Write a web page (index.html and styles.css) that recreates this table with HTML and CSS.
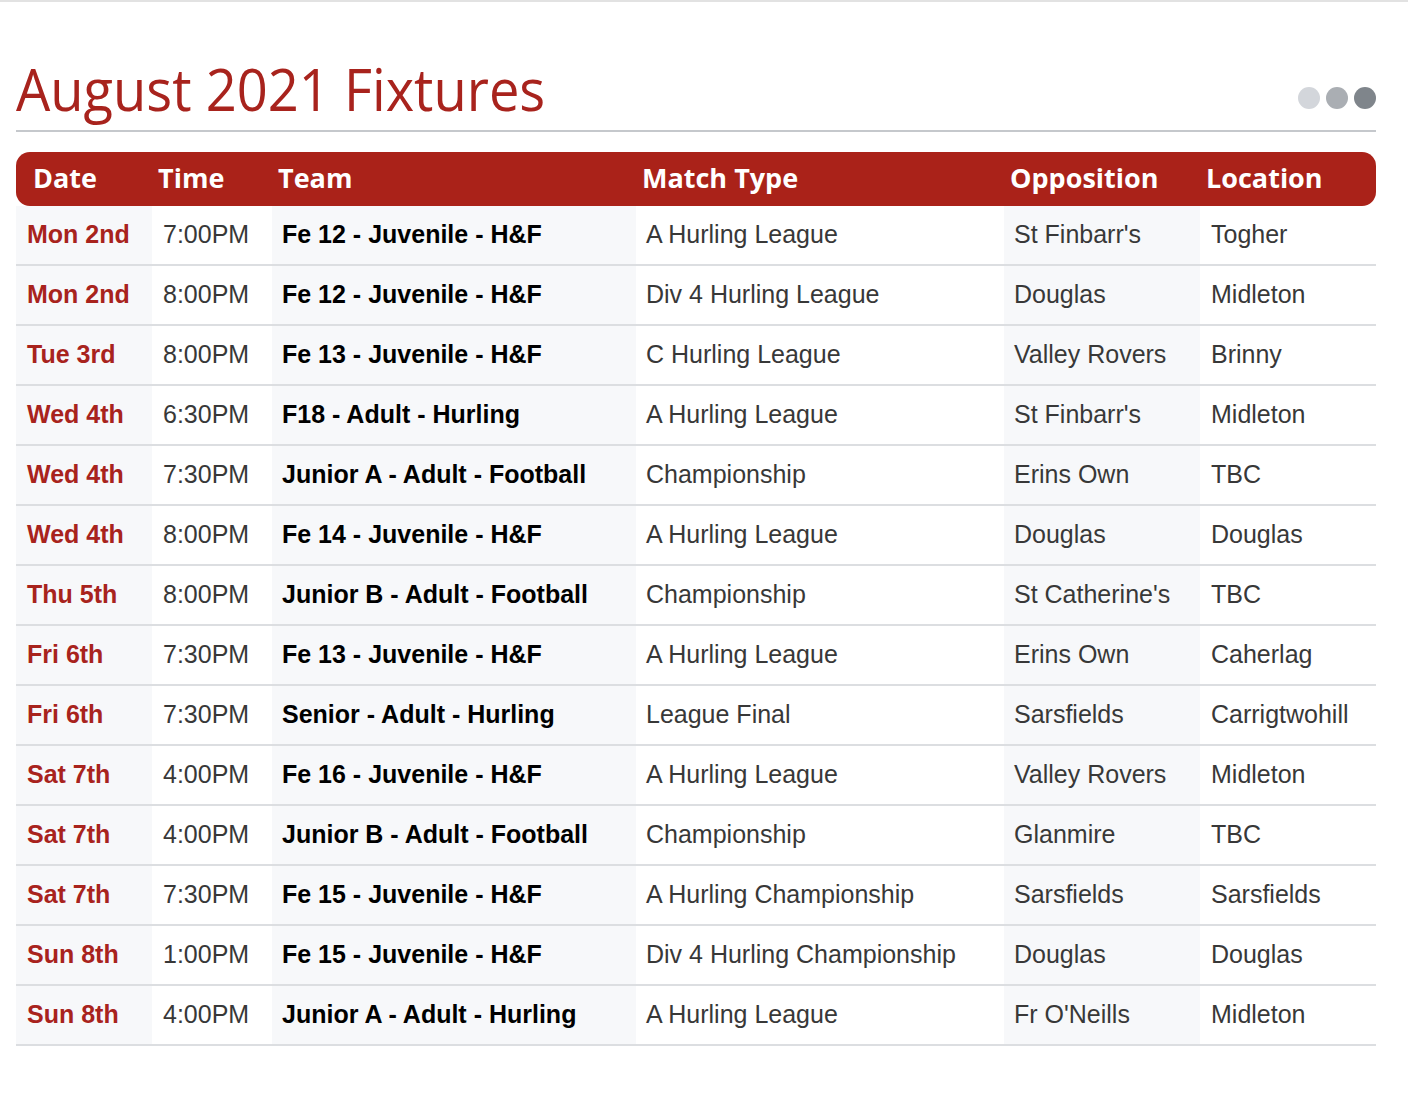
FILE: index.html
```html
<!DOCTYPE html>
<html>
<head>
<meta charset="utf-8">
<title>August 2021 Fixtures</title>
<link rel="stylesheet" href="styles.css">
</head>
<body>
<div class="topline"></div>
<main class="page">
  <header class="head">
    <h1 class="title">August 2021 Fixtures</h1>
    <div class="dots"><span class="dot d1"></span><span class="dot d2"></span><span class="dot d3"></span></div>
  </header>
  <div class="rule"></div>
  <table class="fixtures">
    <colgroup>
      <col class="c-date"><col class="c-time"><col class="c-team"><col class="c-type"><col class="c-opp"><col class="c-loc">
    </colgroup>
    <thead>
      <tr><th>Date</th><th>Time</th><th>Team</th><th>Match Type</th><th>Opposition</th><th>Location</th></tr>
    </thead>
    <tbody>
      <tr><td>Mon 2nd</td><td>7:00PM</td><td>Fe 12 - Juvenile - H&amp;F</td><td>A Hurling League</td><td>St Finbarr's</td><td>Togher</td></tr>
      <tr><td>Mon 2nd</td><td>8:00PM</td><td>Fe 12 - Juvenile - H&amp;F</td><td>Div 4 Hurling League</td><td>Douglas</td><td>Midleton</td></tr>
      <tr><td>Tue 3rd</td><td>8:00PM</td><td>Fe 13 - Juvenile - H&amp;F</td><td>C Hurling League</td><td>Valley Rovers</td><td>Brinny</td></tr>
      <tr><td>Wed 4th</td><td>6:30PM</td><td>F18 - Adult - Hurling</td><td>A Hurling League</td><td>St Finbarr's</td><td>Midleton</td></tr>
      <tr><td>Wed 4th</td><td>7:30PM</td><td>Junior A - Adult - Football</td><td>Championship</td><td>Erins Own</td><td>TBC</td></tr>
      <tr><td>Wed 4th</td><td>8:00PM</td><td>Fe 14 - Juvenile - H&amp;F</td><td>A Hurling League</td><td>Douglas</td><td>Douglas</td></tr>
      <tr><td>Thu 5th</td><td>8:00PM</td><td>Junior B - Adult - Football</td><td>Championship</td><td>St Catherine's</td><td>TBC</td></tr>
      <tr><td>Fri 6th</td><td>7:30PM</td><td>Fe 13 - Juvenile - H&amp;F</td><td>A Hurling League</td><td>Erins Own</td><td>Caherlag</td></tr>
      <tr><td>Fri 6th</td><td>7:30PM</td><td>Senior - Adult - Hurling</td><td>League Final</td><td>Sarsfields</td><td>Carrigtwohill</td></tr>
      <tr><td>Sat 7th</td><td>4:00PM</td><td>Fe 16 - Juvenile - H&amp;F</td><td>A Hurling League</td><td>Valley Rovers</td><td>Midleton</td></tr>
      <tr><td>Sat 7th</td><td>4:00PM</td><td>Junior B - Adult - Football</td><td>Championship</td><td>Glanmire</td><td>TBC</td></tr>
      <tr><td>Sat 7th</td><td>7:30PM</td><td>Fe 15 - Juvenile - H&amp;F</td><td>A Hurling Championship</td><td>Sarsfields</td><td>Sarsfields</td></tr>
      <tr><td>Sun 8th</td><td>1:00PM</td><td>Fe 15 - Juvenile - H&amp;F</td><td>Div 4 Hurling Championship</td><td>Douglas</td><td>Douglas</td></tr>
      <tr><td>Sun 8th</td><td>4:00PM</td><td>Junior A - Adult - Hurling</td><td>A Hurling League</td><td>Fr O'Neills</td><td>Midleton</td></tr>
    </tbody>
  </table>
</main>
</body>
</html>
```

FILE: styles.css
```css
html, body {
  margin: 0;
  padding: 0;
  background: #ffffff;
}

.topline {
  height: 2px;
  background: #e2e2e2;
}

.page {
  padding: 50px 32px 40px 16px;
}

.head {
  display: flex;
  justify-content: space-between;
  align-items: flex-end;
}

.title {
  margin: 0;
  font-family: "Open Sans", sans-serif;
  font-weight: 400;
  font-size: 59px;
  line-height: 72px;
  color: #a8231d;
  transform: scaleX(0.92);
  transform-origin: left center;
}

.dots {
  display: flex;
  gap: 6px;
  margin-bottom: 15px;
}

.dot {
  width: 22px;
  height: 22px;
  border-radius: 50%;
}

.d1 { background: #d3d6db; }
.d2 { background: #aaaeb3; }
.d3 { background: #7f858b; }

.rule {
  height: 2px;
  background: #c5c8cc;
  margin-top: 6px;
  margin-bottom: 20px;
}

.fixtures {
  width: 1360px;
  border-collapse: separate;
  border-spacing: 0;
  table-layout: fixed;
}

.c-date { width: 136px; }
.c-time { width: 120px; }
.c-team { width: 364px; }
.c-type { width: 368px; }
.c-opp { width: 196px; }
.c-loc { width: 176px; }

.fixtures th {
  height: 54px;
  padding: 0 0 2px 6px;
  background: #aa2219;
  color: #ffffff;
  text-align: left;
  font-family: "Open Sans", sans-serif;
  font-weight: 700;
  font-size: 27px;
  line-height: 52px;
  white-space: nowrap;
  box-sizing: border-box;
}

.fixtures th:first-child {
  padding-left: 17px;
  border-radius: 14px 0 0 14px;
}

.fixtures th:last-child {
  border-radius: 0 14px 14px 0;
}

.fixtures td {
  height: 56px;
  padding: 0 0 2px 10px;
  border-bottom: 2px solid #dcdee1;
  font-family: "Liberation Sans", Arial, sans-serif;
  font-size: 25px;
  line-height: 30px;
  color: #383838;
  white-space: nowrap;
  vertical-align: middle;
  box-sizing: content-box;
}

.fixtures td:nth-child(1),
.fixtures td:nth-child(3),
.fixtures td:nth-child(5) {
  background: #f7f8fa;
}

.fixtures td:nth-child(1) {
  padding-left: 11px;
  color: #a8231d;
  font-weight: 700;
}

.fixtures td:nth-child(2),
.fixtures td:nth-child(6) {
  padding-left: 11px;
}

.fixtures td:nth-child(3) {
  color: #000000;
  font-weight: 700;
}
```
